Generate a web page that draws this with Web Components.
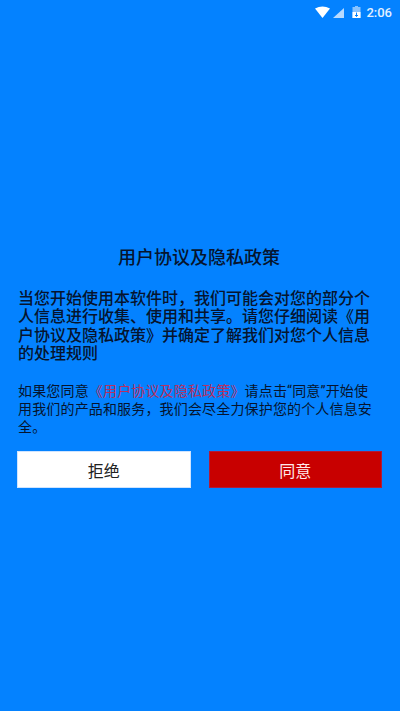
<!DOCTYPE html>
<html lang="zh"><head><meta charset="utf-8"><style>
html,body{margin:0;height:711px;overflow:hidden;background:#0482ff}
</style></head><body>
<app-screen>
<status-bar slot="status"></status-bar>
<h-title>用户协议及隐私政策</h-title>
<intro-text>当您开始使用本软件时，我们可能会对您的部分个人信息进行收集、使用和共享。请您仔细阅读《用户协议及隐私政策》并确定了解我们对您个人信息的处理规则</intro-text>
<note-text>如果您同意<span style="color:#b83060">《用户协议及隐私政策》</span>请点击“同意”开始使用我们的产品和服务，我们会尽全力保护您的个人信息安全。</note-text>
<action-row><action-button>拒绝</action-button><action-button primary>同意</action-button></action-row>
</app-screen>
<script>
function def(name,html){customElements.define(name,class extends HTMLElement{constructor(){super();this.attachShadow({mode:'open'}).innerHTML=html}})}
const F='"Noto Sans CJK SC","Liberation Sans",sans-serif';
def('app-screen',`<style>:host{display:flex;flex-direction:column;width:400px;height:711px;background:#0482ff;font-family:${F};color:#06142e}
.body{display:flex;flex-direction:column;padding:220px 28px 0 18px}</style><slot name="status"></slot><div class="body"><slot></slot></div>`);
def('status-bar',`<style>:host{display:flex;align-items:center;justify-content:flex-end;height:24px;padding-right:8px;box-sizing:border-box;color:#e2f0ff;font:500 13px Roboto,sans-serif}
svg{display:block}</style>
<svg width="15" height="12" viewBox="0 0 15 12" style="margin-right:3px"><path d="M0 2.500Q7.500-1.500 15 2.500L7.500 12Z" fill="#fff"/></svg>
<svg width="11" height="10" viewBox="0 0 11 10" style="margin-right:8px;margin-top:2px"><path d="M11 0V10H0Z" fill="#d8eaff" opacity=".85"/></svg>
<svg width="9" height="12" viewBox="0 0 9 12" style="margin-right:5px"><path d="M3 0H6V1H8.500V12H.5V1H3Z" fill="#b5d8ff" opacity=".75"/><path d="M.5 6H8.500V12H.5Z" fill="#fff"/><path d="M4.500 6.500V10.500M3 9L4.500 10.500 6 9" stroke="#0482ff" fill="none"/></svg>
<span>2:06</span>`);
def('h-title',`<style>:host{display:block;text-align:center;width:362px;font-size:18px;font-weight:500;line-height:24px;margin-bottom:19.500px}</style><slot></slot>`);
def('intro-text',`<style>:host{display:block;font-size:16px;font-weight:500;line-height:18.500px;margin-bottom:20px}</style><slot></slot>`);
def('note-text',`<style>:host{display:block;width:360px;font-family:Roboto,"Noto Sans CJK SC",sans-serif;font-size:14px;letter-spacing:.16px;line-height:18px;margin-bottom:15.500px}</style><slot></slot>`);
def('action-row',`<style>:host{display:flex;gap:18px;width:365px;margin-left:-1px}</style><slot></slot>`);
customElements.define('action-button',class extends HTMLElement{constructor(){super();this.attachShadow({mode:'open'}).innerHTML=`<style>:host{flex:1;display:flex;align-items:center;justify-content:center;height:37px;box-sizing:border-box;font-size:16px;background:#fff;color:#222;border:1px solid #cfe4ff}
:host([primary]){background:#c80000;color:#ffe9e9;border-color:#b01a3a}</style><slot></slot>`}});
</script>
</body></html>
